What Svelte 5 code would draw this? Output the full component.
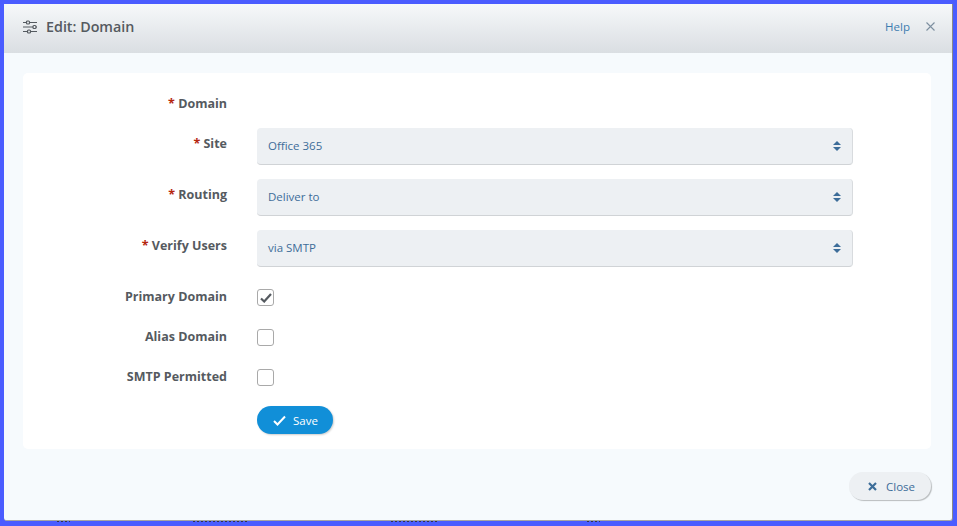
<script>
	const selects = [
		{ label: 'Site', value: 'Office 365' },
		{ label: 'Routing', value: 'Deliver to' },
		{ label: 'Verify Users', value: 'via SMTP' }
	];
	const checks = [
		{ label: 'Primary Domain', checked: true },
		{ label: 'Alias Domain', checked: false },
		{ label: 'SMTP Permitted', checked: false }
	];
	// bits of the page behind that stick out under the dialog
	const peeks = [
		{ left: 57, width: 13 },
		{ left: 193, width: 55 },
		{ left: 391, width: 48 },
		{ left: 587, width: 13 }
	];
</script>

<div class="frame">
	<div class="dialog">
		<header class="head">
			<svg class="tune" width="16" height="14" viewBox="0 0 16 14" fill="none" stroke="#555a60" stroke-width="1.200">
				<path d="M1 2.500h3M8 2.500h7M1 7h10M14 7h1M1 11.500h4M9 11.500h6" />
				<rect x="4.500" y="1" width="3" height="3" rx="1" />
				<rect x="11" y="5.500" width="3" height="3" rx="1" />
				<rect x="5.500" y="10" width="3" height="3" rx="1" />
			</svg>
			<h1>Edit: Domain</h1>
			<a class="help" href="#help">Help</a>
			<svg class="x" width="9" height="9" viewBox="0 0 9 9" stroke="#7d8fa0" stroke-width="1.100" fill="none">
				<path d="M.5.500l8 8M8.500.500l-8 8" />
			</svg>
		</header>

		<div class="body">
			<form class="card">
				<div class="row domain">
					<span class="label"><i>*</i> Domain</span>
				</div>
				{#each selects as s}
					<div class="row sel">
						<span class="label"><i>*</i> {s.label}</span>
						<div class="select">
							<span>{s.value}</span>
							<svg width="8" height="10" viewBox="0 0 8 10" fill="#3d6d99">
								<path d="M4 0l4 4H0zM4 10L0 6h8z" />
							</svg>
						</div>
					</div>
				{/each}
				<div class="checks">
					{#each checks as c}
						<div class="row chk">
							<span class="label">{c.label}</span>
							<span class="box">
								{#if c.checked}
									<svg width="12" height="10" viewBox="0 0 12 10" fill="none" stroke="#555a60" stroke-width="2.200">
										<path d="M1 5.500l3.200 3L11 1" />
									</svg>
								{/if}
							</span>
						</div>
					{/each}
				</div>
				<div class="actions">
					<button type="button" class="save">
						<svg width="13" height="11" viewBox="0 0 13 11" fill="none" stroke="#fff" stroke-width="2">
							<path d="M1 6l3.500 3.500L12 1.500" />
						</svg>
						Save
					</button>
				</div>
			</form>
			<div class="foot">
				<button type="button" class="close">
					<svg width="9" height="9" viewBox="0 0 9 9" fill="none" stroke="#3d6d99" stroke-width="2.200">
						<path d="M1 1l7 7M8 1L1 8" />
					</svg>
					Close
				</button>
			</div>
		</div>
	</div>
	{#each peeks as p}
		<span class="peek" style="left: {p.left}px; width: {p.width}px"></span>
	{/each}
</div>

<style>
	:global(body) {
		margin: 0;
		background: #4a5cff;
	}

	.frame {
		position: relative;
		height: 526px;
		box-sizing: border-box;
		padding: 4px;
		font-family: 'Open Sans', sans-serif;
		font-size: 11.500px;
		color: #555a60;
	}

	.peek {
		position: absolute;
		top: 521px;
		height: 1px;
		background: repeating-linear-gradient(90deg, #2f3550 0 2px, transparent 2px 4px);
	}

	.dialog {
		height: 517px;
		display: flex;
		flex-direction: column;
		background: #f6fafd;
		border-radius: 0 0 3px 3px;
		border-bottom: 1px solid #a5a5a5;
		border-right: 1px solid #8a8a8a;
		box-sizing: border-box;
	}

	.head {
		height: 49px;
		flex: none;
		box-sizing: border-box;
		display: flex;
		align-items: center;
		padding: 0 17px 4px 18px;
		background: linear-gradient(#f6f8fa, #dadee2);
	}

	.tune {
		margin-right: 8px;
	}

	h1 {
		margin: 0;
		font-size: 14.300px;
		font-weight: 600;
		flex: 1;
		color: #555a60;
	}

	.help {
		color: #3d7cb0;
		text-decoration: none;
		margin-right: 16px;
	}

	.body {
		flex: 1;
		padding: 20px 21px 0 19px;
	}

	.card {
		height: 376px;
		box-sizing: border-box;
		background: #fff;
		border-radius: 5px;
		padding-top: 21px;
	}

	.row {
		display: flex;
		align-items: flex-start;
	}

	.label {
		width: 204px;
		flex: none;
		text-align: right;
		font-size: 12.500px;
		font-weight: 700;
		line-height: 20px;
		margin-right: 30px;
	}

	.label i {
		color: #b5260f;
		font-style: normal;
	}

	.domain {
		height: 34px;
	}

	.sel {
		height: 51px;
	}

	.sel .label {
		margin-top: 6px;
	}

	.select {
		width: 596px;
		height: 37px;
		box-sizing: border-box;
		display: flex;
		align-items: center;
		justify-content: space-between;
		padding: 0 11px 1px 11px;
		background: #edf0f3;
		border-radius: 4px;
		border-right: 1px solid #d8dbde;
		border-bottom: 1px solid #d0d3d6;
		color: #3d6d99;
	}

	.checks {
		padding-top: 2px;
	}

	.chk {
		height: 40px;
	}

	.chk .label {
		margin-top: 4px;
	}

	.box {
		width: 17px;
		height: 17px;
		box-sizing: border-box;
		margin-top: 6px;
		display: flex;
		align-items: center;
		justify-content: center;
		background: #fff;
		border: 1px solid #a9a9a9;
		border-radius: 3px;
	}

	.actions {
		padding-left: 234px;
		margin-top: 3px;
	}

	button {
		font-family: inherit;
		border: none;
		display: flex;
		align-items: center;
		font-size: 11.500px;
	}

	.save {
		width: 76px;
		height: 28px;
		padding: 0 0 0 16px;
		gap: 7px;
		background: #118fd8;
		color: #fff;
		border-radius: 14px;
		box-shadow: 1px 1px 2px rgba(0, 0, 0, 0.2);
	}

	.foot {
		display: flex;
		justify-content: flex-end;
		margin-top: 23px;
	}

	.close {
		width: 82px;
		height: 28px;
		padding: 0 0 0 19px;
		gap: 9px;
		background: #edf0f3;
		color: #3d6d99;
		border-radius: 14px;
		box-shadow: 1px 1px 1px rgba(0, 0, 0, 0.25);
	}
</style>
